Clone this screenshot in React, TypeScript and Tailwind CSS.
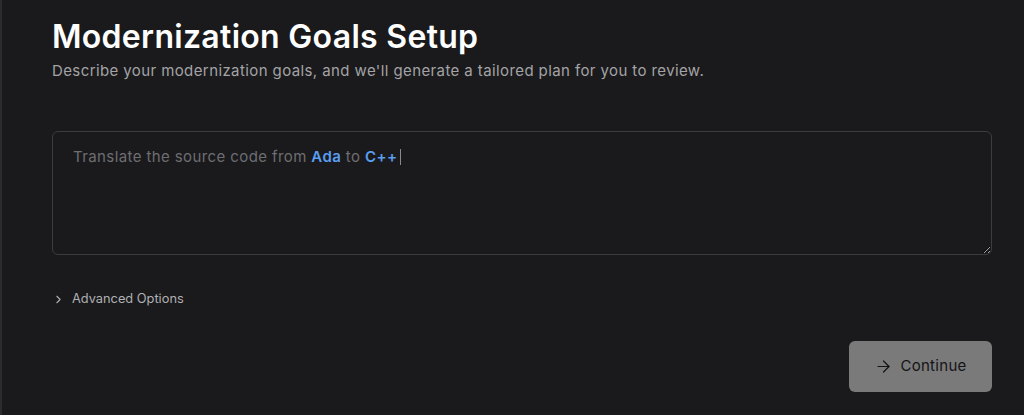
import React from 'react';
import { ChevronRight, ArrowRight } from 'lucide-react';

const App: React.FC = () => {
  return (
    <div className="min-h-[415px] w-full bg-[#1a1a1c] font-['Inter',sans-serif] border-l-[2px] border-[#2c2c2e] pl-[50px] pr-[32px] pt-[17px]">
      {/* Header */}
      <h1 className="text-[32px] leading-[40px] font-semibold text-white tracking-[0.3px]">
        Modernization Goals Setup
      </h1>
      <p className="mt-[3px] text-[15px] leading-[22px] tracking-[0.4px] text-[#a3a3a6]">
        Describe your modernization goals, and we'll generate a tailored plan for you to review.
      </p>

      {/* Goal input */}
      <div className="mt-[49px] h-[124px] resize-y overflow-auto rounded-md border border-[#3c3c3f] bg-[#1a1a1c] pl-[20px] pr-4 pt-[13px] text-[15px] leading-[24px] tracking-[0.4px] text-[#6e6e72]">
        Translate the source code from <span className="font-semibold text-[#5a9ef2]">Ada</span> to{' '}
        <span className="font-semibold text-[#5a9ef2]">C++</span>
        <span className="ml-[3px] inline-block h-[16px] w-px translate-y-[3px] bg-[#8a8a8e]" />
      </div>

      {/* Advanced options */}
      <button className="mt-[34px] flex items-center gap-[7px] text-[13px] leading-[20px] text-[#b0b0b3]">
        <ChevronRight className="h-[13px] w-[13px]" strokeWidth={2} />
        <span className="text-[12.8px]">Advanced Options</span>
      </button>

      {/* Footer */}
      <div className="mt-[32px] flex justify-end">
        <button className="flex h-[51px] w-[143px] items-center justify-center gap-[7px] rounded-md bg-[#7a7a7b] text-[15px] tracking-[0.3px] text-[#141416]">
          <ArrowRight className="h-[19px] w-[19px]" strokeWidth={1.5} />
          Continue
        </button>
      </div>
    </div>
  );
};

export default App;
